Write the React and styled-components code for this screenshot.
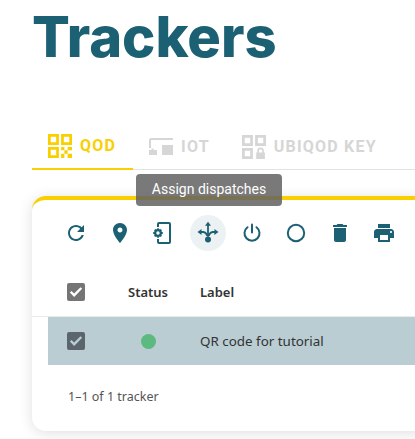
import React from "react";
import styled, { createGlobalStyle } from "styled-components";

const Global = createGlobalStyle`
  html, body { margin: 0; padding: 0; background: #fff; overflow: hidden; }
  body { width: 415px; height: 439px; font-family: "Noto Sans", sans-serif; }
`;

const Page = styled.div`
  width: 415px;
  height: 439px;
  overflow: hidden;
  position: relative;
  padding: 0 0 0 32px;
  box-sizing: border-box;
`;

const Title = styled.h1`
  margin: 0;
  padding: 3px 0 0;
  height: 123px;
  box-sizing: border-box;
  font-family: Inter, sans-serif;
  font-weight: 800;
  font-size: 56px;
  line-height: 68px;
  letter-spacing: 0;
  color: #1c6074;
`;

const TabBar = styled.div`
  display: flex;
  height: 47px;
  width: 383px;
  box-sizing: border-box;
  border-bottom: 1px solid #e2e2e2;
`;

const Tab = styled.div`
  display: flex;
  align-items: center;
  gap: 8px;
  height: 47px;
  box-sizing: border-box;
  padding: 1px ${p => p.$pr}px 1px ${p => p.$pl}px;
  border-bottom: ${p => (p.$active ? "2px solid #f9cf00" : "none")};
  color: ${p => (p.$active ? "#f9cf00" : "#d6d6d6")};
  font-family: Roboto, sans-serif;
  font-weight: 700;
  font-size: 16px;
  letter-spacing: 1.2px;
  white-space: nowrap;
`;

const Card = styled.div`
  margin-top: 26px;
  width: 420px;
  height: 235px;
  box-sizing: border-box;
  background: #fff;
  border-top: 4px solid #f9cf00;
  border-radius: 14px;
  box-shadow: 0 2px 14px rgba(0, 0, 0, 0.13);
`;

const Toolbar = styled.div`
  display: flex;
  align-items: center;
  height: 36px;
  padding: 15px 0 0 26px;
`;

const IconButton = styled.div`
  flex: none;
  width: 36px;
  height: 36px;
  margin-right: 8px;
  border-radius: 50%;
  display: flex;
  align-items: center;
  justify-content: center;
  background: ${p => (p.$active ? "#ecf2f4" : "transparent")};
  color: #1c6074;
`;

const HeaderRow = styled.div`
  display: flex;
  align-items: center;
  height: 66px;
  padding: 16px 0 0 16px;
  box-sizing: border-box;
  border-bottom: 1px solid #eaeaea;
  width: 383px;
  font-weight: 600;
  font-size: 13px;
  color: #333;
`;

const DataRow = styled.div`
  display: flex;
  align-items: center;
  height: 48px;
  margin-left: 16px;
  background: #b9cdd3;
  font-size: 13.4px;
  color: #333;
`;

const CheckCell = styled.div`
  width: 64px;
  flex: none;
  padding-left: 19px;
  box-sizing: border-box;
`;

const Check = styled.span`
  display: flex;
  align-items: center;
  justify-content: center;
  width: 18px;
  height: 18px;
  border-radius: 2px;
  background: ${p => (p.$dark ? "#5a666b" : "#757575")};
  color: ${p => (p.$dark ? "#b9cdd3" : "#fff")};
`;

const StatusCell = styled.div`
  width: 72px;
  margin-right: 16px;
  flex: none;
  display: flex;
  justify-content: center;
`;

const Dot = styled.span`
  width: 15px;
  height: 15px;
  border-radius: 50%;
  background: #5cb97f;
`;

const Footer = styled.div`
  padding: 22px 0 0 36px;
  font-size: 12.5px;
  line-height: 20px;
  color: #555;
`;

const Tooltip = styled.div`
  position: absolute;
  left: 136px;
  top: 174px;
  width: 146px;
  height: 32px;
  box-sizing: border-box;
  border-radius: 4px;
  background: rgba(97, 97, 97, 0.85);
  color: #fff;
  font-family: Roboto, sans-serif;
  font-size: 14px;
  line-height: 30px;
  text-align: center;
`;

const Svg = ({ children, size = 24, box = "0 0 24 24" }) => (
  <svg width={size} height={size} viewBox={box} fill="currentColor" style={{ flex: "none" }}>{children}</svg>
);

const squares = "M1 1h10v10H1zM3.500 3.500v5h5v-5zM13 1h10v10H13zM15.500 3.500v5h5v-5zM1 13h10v10H1zM3.500 15.500v5h5v-5z";

const QrIcon = () => (
  <Svg box="1 1 22 22">
    <path fillRule="evenodd" d={squares} />
    <path d="M13 13h3v3h-3zM19 13h4v3h-4zM16 16h3v3h-3zM13 19h3v4h-3zM19 19h4v4h-4z" />
  </Svg>
);

const IotIcon = () => (
  <Svg>
    <path d="M0 5C0 4 1 3 2 3H24v2H2v8H0zM0 15h2.500v-1.500h2V15H8v5H0zM13 10h11v10H13z" />
  </Svg>
);

const KeyIcon = () => (
  <Svg box="1 1 22 22">
    <path fillRule="evenodd" d={squares} />
    <path fillRule="evenodd" d="M14 17h1v-1.500a3 3 0 0 1 6 0V17h1v6h-8zM16.500 17h3v-1.500a1.500 1.500 0 0 0-3 0z" />
  </Svg>
);

const CheckMark = () => (
  <Svg size={18}>
    <path d="M9.500 18.500 3.800 12.800l2.200-2.200 3.500 3.500 8.500-8.500 2.200 2.200z" />
  </Svg>
);

const icons = [
  <Svg key="r"><path d="M17.650 6.350C16.200 4.900 14.210 4 12 4c-4.420 0-7.990 3.580-7.990 8s3.570 8 7.990 8c3.730 0 6.840-2.550 7.730-6h-2.080c-.82 2.330-3.040 4-5.650 4-3.310 0-6-2.690-6-6s2.690-6 6-6c1.660 0 3.140.69 4.220 1.780L13 11h7V4l-2.350 2.350z" /></Svg>,
  <Svg key="p"><path d="M12 2C8.130 2 5 5.130 5 9c0 5.250 7 13 7 13s7-7.750 7-13c0-3.870-3.130-7-7-7zm0 9.500c-1.380 0-2.500-1.120-2.500-2.500s1.120-2.500 2.500-2.500 2.500 1.120 2.500 2.500-1.120 2.500-2.500 2.500z" /></Svg>,
  <Svg key="m">
    <path d="M7 1h10a2 2 0 0 1 2 2v18a2 2 0 0 1-2 2H7a2 2 0 0 1-2-2v-3h2v3h10V3H7v3H5V3a2 2 0 0 1 2-2z" />
    <circle cx="6" cy="12" r="2.800" fill="none" stroke="currentColor" strokeWidth="2.200" />
    <path d="M5.100 7.200h1.800v2H5.100zM5.100 14.800h1.800v2H5.100zM1.200 11.100h2v1.800h-2zM8.800 11.100h2v1.800h-2z" />
    <path d="M2 9.200l1.300-1.300 1.500 1.500-1.300 1.300zM10 14.800l-1.300 1.300-1.500-1.500 1.300-1.300zM2 14.800l1.300 1.300 1.500-1.500-1.300-1.300zM10 9.200L8.700 7.900 7.200 9.400l1.300 1.300z" />
  </Svg>,
  <Svg key="d">
    <path d="M12 .8 15 4.800h-2.100v11h-1.800v-11H9z" />
    <path d="M1.500 11 5.500 8v2.100h1.300c2.700 0 5.200 2.200 5.200 5h-1.800c0-1.800-1.600-3.200-3.400-3.200H5.500V14z" />
    <path d="M22.500 11 18.500 8v2.100h-1.300c-2.700 0-5.200 2.200-5.200 5h1.800c0-1.800 1.600-3.200 3.400-3.200h1.100V14z" />
    <circle cx="12" cy="18.500" r="3" />
  </Svg>,
  <Svg key="o">
    <path d="M12 3.500v8" fill="none" stroke="currentColor" strokeWidth="2" strokeLinecap="round" />
    <path d="M7.500 6.200a7.500 7.500 0 1 0 9 0" fill="none" stroke="currentColor" strokeWidth="2" strokeLinecap="round" />
  </Svg>,
  <Svg key="c"><circle cx="12" cy="12" r="8.200" fill="none" stroke="currentColor" strokeWidth="2" /></Svg>,
  <Svg key="t"><path d="M6 19c0 1.100.9 2 2 2h8c1.100 0 2-.9 2-2V7H6v12zM19 4h-3.500l-1-1h-5l-1 1H5v2h14V4z" /></Svg>,
  <Svg key="q"><path d="M19 8H5c-1.660 0-3 1.340-3 3v6h4v4h12v-4h4v-6c0-1.660-1.340-3-3-3zm-3 11H8v-5h8v5zm3-7c-.55 0-1-.45-1-1s.45-1 1-1 1 .45 1 1-.45 1-1 1zm-1-9H6v4h12V3z" /></Svg>,
];

export default function App() {
  return (
    <Page>
      <Global />
      <Title>Trackers</Title>
      <TabBar>
        <Tab $active $pl={16} $pr={17}><QrIcon />QOD</Tab>
        <Tab $pl={16} $pr={17}><IotIcon />IOT</Tab>
        <Tab $pl={15} $pr={16}><KeyIcon />UBIQOD KEY</Tab>
      </TabBar>
      <Card>
        <Toolbar>
          {icons.map((icon, i) => (
            <IconButton key={i} $active={i === 3}>{icon}</IconButton>
          ))}
        </Toolbar>
        <HeaderRow>
          <CheckCell><Check><CheckMark /></Check></CheckCell>
          <StatusCell>Status</StatusCell>
          <span>Label</span>
        </HeaderRow>
        <DataRow>
          <CheckCell><Check $dark><CheckMark /></Check></CheckCell>
          <StatusCell><Dot /></StatusCell>
          <span>QR code for tutorial</span>
        </DataRow>
        <Footer>1–1 of 1 tracker</Footer>
      </Card>
      <Tooltip>Assign dispatches</Tooltip>
    </Page>
  );
}
